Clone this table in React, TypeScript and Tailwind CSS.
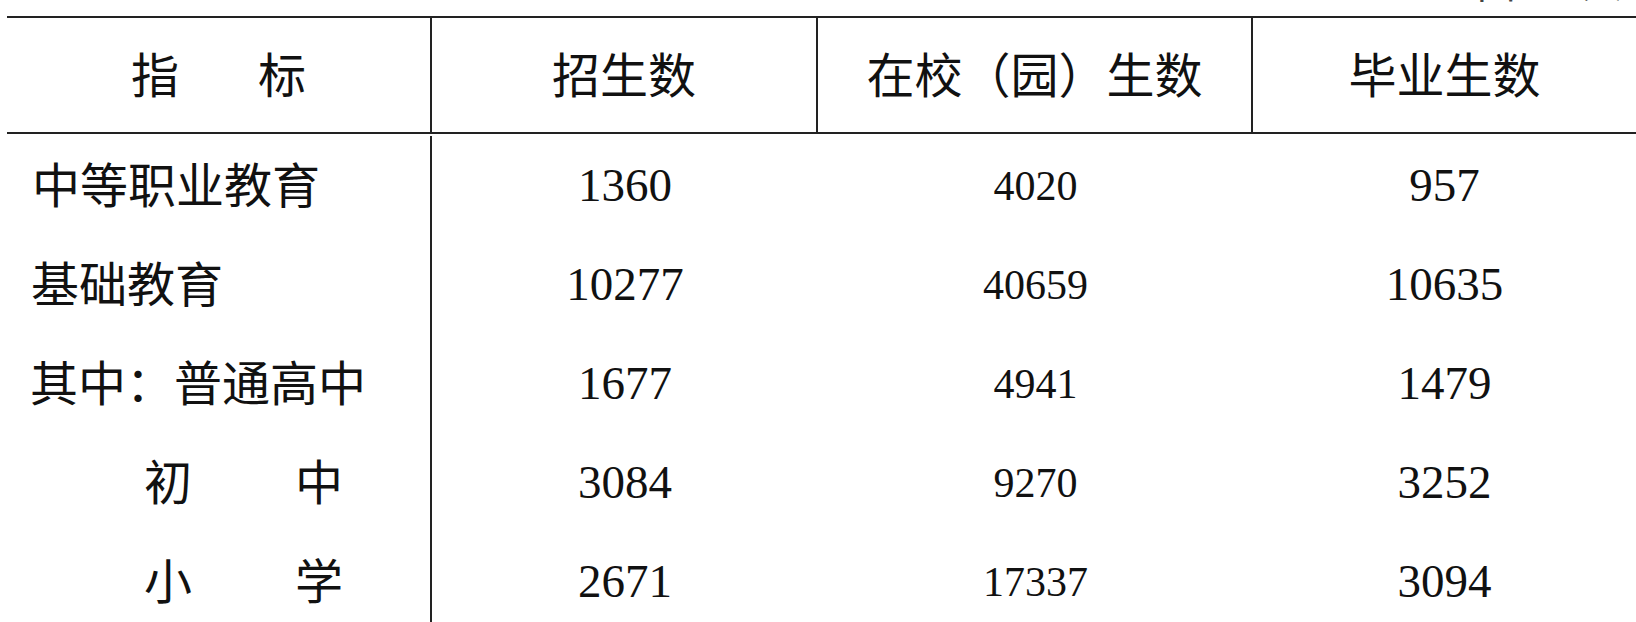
// 教育统计表：招生 / 在校 / 毕业生数

const cjk = "font-['Noto_Sans_CJK_SC',sans-serif]";
const num = "font-['Liberation_Serif',serif]";

type Row = { label: React.ReactNode; a: string; b: string; c: string };

const rows: Row[] = [
  { label: <span className="pl-[25px]">中等职业教育</span>, a: "1360", b: "4020", c: "957" },
  { label: <span className="pl-[24px]">基础教育</span>, a: "10277", b: "40659", c: "10635" },
  { label: <span className="pl-[23px]">其中：普通高中</span>, a: "1677", b: "4941", c: "1479" },
  { label: <Spread left="初" right="中" />, a: "3084", b: "9270", c: "3252" },
  { label: <Spread left="小" right="学" />, a: "2671", b: "17337", c: "3094" },
];

function Spread({ left, right }: { left: string; right: string }) {
  return (
    <span className="flex gap-[103px] pl-[137px]">
      <span>{left}</span>
      <span>{right}</span>
    </span>
  );
}

export default function App() {
  return (
    <div className={`h-[622px] w-[1636px] overflow-hidden bg-white text-[#111] ${cjk}`}>
      {/* 表头上方被裁掉的单位说明 */}
      <div className="h-4 overflow-hidden">
        <div className="-mt-[39px] pr-[14px] text-right text-[40px] leading-none text-[#444]">单位：人</div>
      </div>

      <div className="ml-[7px] grid h-[118px] grid-cols-[425px_386px_435px_1fr] border-y-2 border-[#222] text-[48px] leading-none">
        <div className="flex items-center justify-center gap-[79px] border-r-2 border-[#222] pb-[6px]">
          <span>指</span>
          <span>标</span>
        </div>
        <div className="flex items-center justify-center border-r-2 border-[#222] pb-[6px]">招生数</div>
        <div className="flex items-center justify-center border-r-2 border-[#222] pb-[6px]">在校（园）生数</div>
        <div className="flex items-center justify-center pb-[6px]">毕业生数</div>
      </div>

      <div className="ml-[7px] grid grid-cols-[425px_386px_435px_1fr] pt-[2px]">
        {rows.map((r, i) => (
          <div key={i} className="contents">
            <div className="flex h-[99px] items-center border-r-2 border-[#222] pb-[8px] text-[48px] leading-none">
              {r.label}
            </div>
            <div className={`flex h-[99px] items-center justify-center text-[47px] leading-none ${num}`}>{r.a}</div>
            <div className={`flex h-[99px] items-center justify-center text-[42px] leading-none ${num}`}>{r.b}</div>
            <div className={`flex h-[99px] items-center justify-center text-[47px] leading-none ${num}`}>{r.c}</div>
          </div>
        ))}
      </div>
    </div>
  );
}
